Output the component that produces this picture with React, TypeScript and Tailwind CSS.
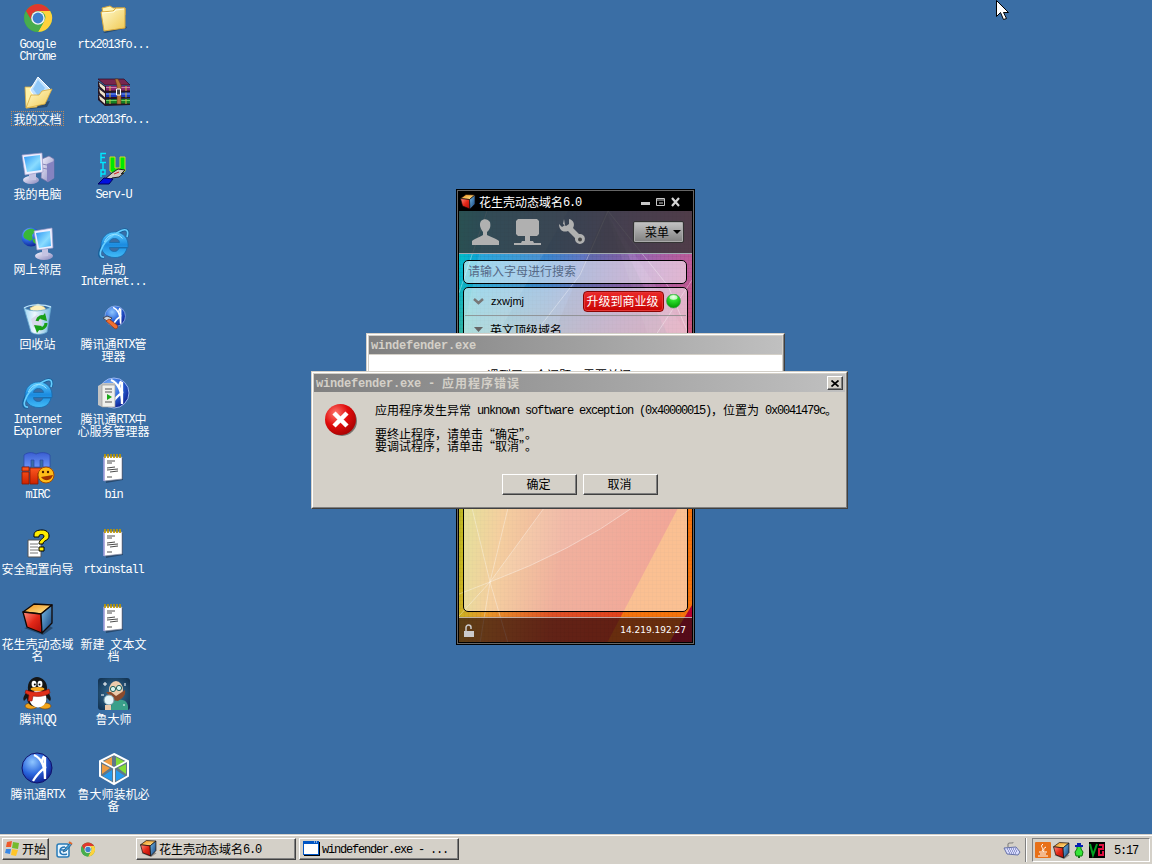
import type { ReactNode } from 'react';

const CJK = /([\u2018-\u201d\u3000-\u303f\u4e00-\u9fff\uff00-\uffef]+)/;

/** Mixed text on a bitmap-font grid: 6px Latin cells and 12px Chinese cells. */
function T({ children, bold = false }: { children: string; bold?: boolean }) {
  return (
    <span className="block h-[14px] whitespace-pre pb-[2px] leading-[12px]">
      {children.split(CJK).filter(Boolean).map((s, i) =>
        CJK.test(s) ? (
          <span key={i} className={bold ? "font-['Noto_Sans_CJK_SC',sans-serif] text-[12px] font-bold tracking-[1px]" : "font-['Noto_Sans_CJK_SC',sans-serif] text-[12px]"}>{s}</span>
        ) : (
          <span key={i} className={bold ? "align-[1px] font-['Liberation_Mono',monospace] text-[12px] font-bold leading-[8px] tracking-[-0.2px]" : "align-[1px] font-['Liberation_Mono',monospace] text-[12px] leading-[8px] tracking-[-1.2px]"}>{s}</span>
        ),
      )}
    </span>
  );
}

function Svg({ children, size = 32 }: { children: ReactNode; size?: number }) {
  return <svg width={size} height={size} viewBox="0 0 32 32" className="block shrink-0 overflow-visible">{children}</svg>;
}

function Defs() {
  return (
    <svg className="absolute h-0 w-0">
      <defs>
        <linearGradient id="folder" x1="0" y1="0" x2="1" y2="1"><stop stopColor="#fffbd0" /><stop offset="1" stopColor="#f0c850" /></linearGradient>
        <linearGradient id="screen" x1="0" y1="0" x2="1" y2="1"><stop stopColor="#2f96f4" /><stop offset=".6" stopColor="#8adcff" /><stop offset="1" stopColor="#43aef5" /></linearGradient>
        <linearGradient id="case" x1="0" y1="0" x2="1" y2="1"><stop stopColor="#f4f4ff" /><stop offset="1" stopColor="#8886bb" /></linearGradient>
        <linearGradient id="ie" x1="0" y1="0" x2="0" y2="1"><stop stopColor="#5ccbff" /><stop offset=".5" stopColor="#1b8be0" /><stop offset="1" stopColor="#43bdf8" /></linearGradient>
        <radialGradient id="globe" cx=".35" cy=".3" r=".8"><stop stopColor="#8fc6ff" /><stop offset=".5" stopColor="#2a66dd" /><stop offset="1" stopColor="#0a1684" /></radialGradient>
        <linearGradient id="bin" x1="0" y1="0" x2="1" y2="0"><stop stopColor="#9fd6f3" /><stop offset=".4" stopColor="#eef8ff" /><stop offset="1" stopColor="#78b9df" /></linearGradient>
        <linearGradient id="cubeT" x1="0" y1="0" x2="1" y2="1"><stop stopColor="#f08a10" /><stop offset="1" stopColor="#fff0a0" /></linearGradient>
        <linearGradient id="cubeL" x1="0" y1="0" x2="1" y2="1"><stop stopColor="#ff9080" /><stop offset=".5" stopColor="#e42818" /><stop offset="1" stopColor="#a80c08" /></linearGradient>
        <linearGradient id="cubeR" x1="0" y1="0" x2="1" y2="1"><stop stopColor="#7cc0ec" /><stop offset="1" stopColor="#0d3c78" /></linearGradient>
        <linearGradient id="mircM" x1="0" y1="0" x2="0" y2="1"><stop stopColor="#3a5fd2" /><stop offset="1" stopColor="#6a92f6" /></linearGradient>
        <linearGradient id="mircR" x1="0" y1="0" x2="0" y2="1"><stop stopColor="#ff5a20" /><stop offset="1" stopColor="#cc2200" /></linearGradient>
        <radialGradient id="err" cx=".35" cy=".3" r=".8"><stop stopColor="#ff7a70" /><stop offset=".5" stopColor="#e00c0c" /><stop offset="1" stopColor="#a00000" /></radialGradient>
        <radialGradient id="green" cx=".5" cy=".2" r=".8"><stop stopColor="#c8ffc0" /><stop offset=".35" stopColor="#2ee02e" /><stop offset="1" stopColor="#009800" /></radialGradient>
        <radialGradient id="sage" cx=".5" cy=".5" r=".7"><stop stopColor="#3b78a0" /><stop offset="1" stopColor="#0f2d4c" /></radialGradient>
      </defs>
    </svg>
  );
}

function Chrome({ size = 32 }: { size?: number }) {
  return (
    <Svg size={size}>
      <circle cx="16" cy="15" r="14" fill="#37a84c" />
      <path d="M3.9 8a14 14 0 0 1 24.2 0H16a7 7 0 0 0-6 10.5z" fill="#e0382e" />
      <path d="M28.2 8A14 14 0 0 1 16 29l6-10.5A7 7 0 0 0 21 9.6L16 8z" fill="#ffd23c" />
      <path d="M4 8.2A14 14 0 0 0 16 29l6-10.5a7 7 0 0 1-12 0z" fill="#48ad4d" />
      <circle cx="16" cy="15" r="6.8" fill="#f4f4f4" />
      <circle cx="16" cy="15" r="5.4" fill="#3c80cc" />
    </Svg>
  );
}
const Folder = () => (
  <Svg>
    <path d="M5 29 28 23l1 2-22 5z" fill="#00000055" />
    <path d="M4 5 12 3l3 2 12 0v7L6 14z" fill="#fff4b0" stroke="#d9a93c" />
    <path d="M3 9 15 8l3-3 9 0 0 20L6 28z" fill="url(#folder)" stroke="#d9a93c" />
    <path d="m4 10 12-1 2-2 8-1" stroke="#fffde0" fill="none" />
  </Svg>
);
const Docs = () => (
  <Svg>
    <path d="m5 27 23-4-3 6-17 2z" fill="#00000050" />
    <path d="M3 9h6l2-2 4 2v20L4 30z" fill="#fff2a8" stroke="#d8ac44" strokeWidth=".8" />
    <path d="m16-1 12 12-12 13L8 12z" fill="#c3e3ff" stroke="#fff" />
    <path d="m16 2 7 8-6 9-6-8z" fill="#8fc7f8" />
    <path d="M4 30 9 17l8 0 3-4 10-2-7 15z" fill="url(#folder)" stroke="#d8a93c" strokeWidth=".8" />
  </Svg>
);
const Computer = () => (
  <Svg>
    <path d="m20 6 7-3 5 3v19l-6 4-7-4z" fill="url(#case)" stroke="#7473a8" strokeWidth=".7" />
    <path d="m25 11 7-3v17l-7 4z" fill="#8583c0" /><path d="m20 11 5 1m-5 3 5 1" stroke="#8987b8" />
    <ellipse cx="9" cy="27" rx="8" ry="4" fill="url(#case)" /><path d="m7 20 7 0v7H7z" fill="#c4c3e2" />
    <path d="m0 2 20-2 1 19L3 22z" fill="#efefff" stroke="#9998c6" strokeWidth=".7" /><path d="m2 4 16-2 1 15L5 19z" fill="url(#screen)" />
  </Svg>
);
const Network = () => (
  <Svg>
    <circle cx="9" cy="9" r="9.500" fill="url(#globe)" />
    <path d="M2 5c3-5 8-5 11-3 1 3-3 3-3 6 2 3-1 6-4 4C3 11 0 9 2 5zm9 6c4-1 6 2 4 5-3 0-5-3-4-5z" fill="#38b838" />
    <ellipse cx="22" cy="28" rx="9" ry="4" fill="url(#case)" /><path d="M20 21h6v7h-6z" fill="#c4c3e2" />
    <path d="m12 3 18-3 1 20-16 2z" fill="#efefff" stroke="#9998c6" strokeWidth=".7" /><path d="m14 5 14-2 1 15-12 2z" fill="url(#screen)" />
  </Svg>
);
const Recycle = () => (
  <Svg>
    <path d="m8 5 8-4 6 3 4 5-16 2z" fill="#fff0ba" stroke="#dec26e" strokeWidth=".6" />
    <path d="M2 5c7 4 19 4 27-1l-4 25c-5 3-12 3-16 0z" fill="url(#bin)" stroke="#67a8cf" strokeWidth=".8" />
    <path d="m9 16 6-4 5 4-1 12-8-4z" fill="#d8d8ec" />
    <g stroke="#18a018" strokeWidth="3" fill="none"><path d="M15 18c1-4 5-6 8-3M24 20c0 4-4 7-8 5" /></g>
    <path d="m23 10 2 8-7-2zM12 22l8 1-5 7z" fill="#18a018" />
    <path d="M2 5C8 1 22 1 29 4" stroke="#bde4fb" fill="none" strokeWidth="1.4" />
  </Svg>
);
const IE = () => (
  <Svg>
    <path d="M6 29C-3 31 3 15 14 8S32-2 29 9" fill="none" stroke="#16619d" strokeWidth="3.2" />
    <path d="M16.500 4C8.500 4 3 10 3 17s5 12.500 14 12.500c6.500 0 10.500-3.500 12-9.500h-8c-1 2.500-2.500 3.500-4.500 3.500-3 0-5-1.500-5-4H30C31 10 25 4 16.500 4zM11.500 14.500c.5-3 2.500-4 5-4s4.500 1 5 4z" fill="url(#ie)" stroke="#176bac" strokeWidth=".8" />
    <path d="M6 29C-2 30 4 15 14 8S32-2 29 9" fill="none" stroke="#66ceff" strokeWidth="1.700" />
    <path d="M6.500 14c2-5 6-7.500 10-7.500 4 0 6 2 8 4" stroke="#9ce4ff" fill="none" />
  </Svg>
);
function Rtx({ dark = false }: { dark?: boolean }) {
  return (
    <>
      <circle cx="15" cy="15" r="15" fill="url(#globe)" stroke={dark ? '#10126c' : '#9cb8f0'} />
      <path d="M12 2c7 3 11 11 11 24M22 3c-3 5-2 9 2 12M24 14c-6 4-10 9-13 14M23 4v22" fill="none" stroke="#fff" strokeWidth="2.300" />
    </>
  );
}
const RtxAdmin = () => (
  <Svg>
    <g transform="translate(7 3) scale(.68)"><Rtx /></g>
    <path d="m9 13 5 2-4 4-5-4z" fill="#ccd4dd" stroke="#445" /><path d="m11 16 8 6c2 3-1 5-3 3l-8-7z" fill="#f07030" stroke="#97320d" strokeWidth=".7" />
  </Svg>
);
const RtxServer = () => (
  <Svg>
    <g transform="translate(1 0)"><Rtx /></g>
    <path d="m0 8 5-3h12v24H4l-4-2z" fill="#c3c3c3" /><path d="M4 7h13v22H4z" fill="#f0f0ec" stroke="#999" strokeWidth=".7" />
    <path d="M7 11h7M7 14h7M7 24h7" stroke="#555" /><path d="m9 16 5 3-5 3z" fill="#18a818" />
  </Svg>
);
const Mirc = () => (
  <Svg>
    <path d="M2 14V2c4-3 8-3 12-1 5-2 10-2 14 1v12h-7V7h-3v7h-6V7H9v7z" fill="url(#mircM)" stroke="#2845a6" strokeWidth=".7" />
    <g fill="url(#mircR)" stroke="#8a1700" strokeWidth=".8"><path d="M0 14h7v4H0zM0 19h7v12H0zM8 15h12v5h-4v11H8z" /></g>
    <circle cx="24" cy="22" r="8" fill="#ffbd18" stroke="#a64b00" /><circle cx="21" cy="19" r="1.200" fill="#421800" /><circle cx="26" cy="19" r="1.200" fill="#421800" />
    <path d="m19 24 12-2c-2 6-8 7-12 2z" fill="#a03200" />
  </Svg>
);
const Wizard = () => (
  <Svg>
    <path d="M6 12h13v17H6z" fill="#fff" stroke="#555" /><path d="M8 16h8M8 19h8M8 22h8M8 25h8" stroke="#777" />
    <path d="M12 9V7c0-4 4-5 8-5s7 2 7 6c0 5-6 4-6 8h-4c0-5 5-5 5-8 0-2-5-2-5 0v1zM17 19h5v4h-5z" fill="#ffee00" stroke="#000" />
  </Svg>
);
function Cube({ size = 32 }: { size?: number }) {
  return (
    <Svg size={size}>
      <path d="M2 25 21 32l10-7-7-4z" fill="#00000055" />
      <g stroke="#120805" strokeWidth="1.300" strokeLinejoin="round">
        <path d="m1 9 11-8 18 1-11 9z" fill="url(#cubeT)" /><path d="m1 9 18 2 1 19L5 24z" fill="url(#cubeL)" /><path d="m19 11 11-9 0 18-10 10z" fill="url(#cubeR)" />
      </g>
    </Svg>
  );
}
const QQ = () => (
  <Svg>
    <ellipse cx="9" cy="28" rx="6" ry="3" fill="#f2a51c" stroke="#7a4200" strokeWidth=".6" /><ellipse cx="23" cy="28" rx="6" ry="3" fill="#f2a51c" stroke="#7a4200" strokeWidth=".6" />
    <path d="M6 12C5 4 10-1 15-1s11 5 10 13c3 5 5 9 3 11l-3-3c0 5-4 9-10 9S5 25 5 20l-3 3c-2-3 1-7 4-11z" fill="#151515" />
    <ellipse cx="16" cy="21" rx="8.500" ry="8.500" fill="#fff" /><ellipse cx="12" cy="6" rx="2.400" ry="3.200" fill="#fff" /><ellipse cx="18" cy="6" rx="2.400" ry="3.200" fill="#fff" />
    <circle cx="12.800" cy="6.500" r="1" /><circle cx="17.500" cy="6.500" r="1" /><ellipse cx="15.500" cy="11" rx="7" ry="2" fill="#f7a81d" />
    <path d="M4 12c7 3 14 3 23-1l1 4c-4 3-11 4-17 3l-1 5H6l1-6-4-2z" fill="#e02f1a" stroke="#8d1208" strokeWidth=".6" />
  </Svg>
);
const Archive = () => (
  <Svg>
    {[
      { y: 13, main: '#157f24', side: '#68cf63' },
      { y: 6.5, main: '#1836bd', side: '#76a1f6' },
      { y: 0, main: '#8b256c', side: '#c97aaf' },
    ].map((b) => (
      <g key={b.y} transform={`translate(0 ${b.y})`}>
        <path d="m0 3 7 5h25v6l-25 1-7-6z" fill="#241421" /><path d="m1 4.500 6 4.500v4L2 8.500z" fill="#eee3cb" /><path d="M8 8h24v4.500H8z" fill={b.main} /><path d="M8 9.500h24" stroke={b.side} />
        <path d="M12 8v5M28 8v5" stroke="#d9b23b" />
      </g>
    ))}
    <path d="m0 1 7 6h25l-6-6z" fill="#78264e" stroke="#290c22" strokeWidth=".7" />
    <path d="M17 1h3l3 6v19h-4V8z" fill="#b3743a" stroke="#5c3211" strokeWidth=".5" /><path d="M18.500 11h4v6h-4z" fill="#444" stroke="#fff" />
  </Svg>
);
const ServU = () => (
  <Svg>
    <g fill="none" stroke="#00e8ff" strokeWidth="1.400"><path d="M8 .5H3v8M3 4.500h4M2 9.500h6M5 9.500v7M3 24v-7h4v4H3" /></g>
    <path d="M12 4h5v11h5V4h5v14l-3 2h-9l-3-2z" fill="#00e800" stroke="#d8d820" /><path d="m14 20 6-4 7 1-4 4 3-1-5 4-7 1-3 3-4-2z" fill="#d1c8bd" stroke="#222" />
    <path d="m1 30 5-5 9 1-4 5H0z" fill="#0010e0" stroke="#000060" /><path d="m16 21 5-2" stroke="#d02020" />
  </Svg>
);
const Notepad = () => (
  <Svg>
    <path d="m7 4 18 1v22l-17 3z" fill="#00000055" /><path d="m6 3 18 1v22L6 28z" fill="#fff" stroke="#8a8ca5" strokeWidth=".7" /><path d="M6 4v24" stroke="#a5a0e2" strokeWidth="1.500" />
    <path d="M9 8h8M9 10h5M9 15l8-1M9 17l11-1M12 19l8-1M9 24h5" stroke="#383838" strokeWidth=".9" /><path d="M7 1v4m3-4v4m3-4v4m3-4v4m3-4v4m3-4v4" stroke="#bd9700" strokeWidth="1.700" />
  </Svg>
);
const Sage = () => (
  <Svg>
    <rect width="32" height="32" rx="3" fill="url(#sage)" /><path d="M13 32c0-8 2-10 8-10 6-1 10 3 9 10z" fill="#3aa08a" />
    <ellipse cx="18" cy="12" rx="7" ry="9" fill="#eccbac" /><path d="m8 14 5 0 5 4 9-6c1 5-2 8-7 11l-5-1z" fill="#8b4b2c" />
    <circle cx="15" cy="11" r="2.600" fill="#d8f4ee" stroke="#23605c" /><circle cx="21" cy="10" r="2.600" fill="#d8f4ee" stroke="#23605c" />
    <circle cx="11" cy="22" r="5" fill="#e3f6fb" stroke="#789ba8" /><path d="M7 27h6v5H7z" fill="#eccbac" /><path d="M7 4v4M5 6h4M27 5v3M3 17h3M25 27h2" stroke="#fff" />
  </Svg>
);
const Hex = () => (
  <Svg>
    <path d="m16 1 14 7v15l-14 8-14-8V8z" fill="#607788" stroke="#fff" strokeWidth="2" />
    <path d="m14 4-9 5 9 5zM4 11l8 4-8 6z" fill="#ef9c42" /><path d="m18 4 9 5-9 5zM28 11l-8 4 8 6z" fill="#83dc38" /><path d="m5 23 9-6v11zM27 23l-9-6v11z" fill="#269aee" />
    <path d="M16 15v15M3 8l13 7 13-7" stroke="#fff" strokeWidth="1.800" fill="none" />
  </Svg>
);

type Item = { icon: ReactNode; lines: string[]; selected?: boolean };
const left: Item[] = [
  { icon: <Chrome />, lines: ['Google', 'Chrome'] },
  { icon: <Docs />, lines: ['我的文档'], selected: true },
  { icon: <Computer />, lines: ['我的电脑'] },
  { icon: <Network />, lines: ['网上邻居'] },
  { icon: <Recycle />, lines: ['回收站'] },
  { icon: <IE />, lines: ['Internet', 'Explorer'] },
  { icon: <Mirc />, lines: ['mIRC'] },
  { icon: <Wizard />, lines: ['安全配置向导'] },
  { icon: <Cube />, lines: ['花生壳动态域', '名'] },
  { icon: <QQ />, lines: ['腾讯QQ'] },
  { icon: <Svg><Rtx dark /></Svg>, lines: ['腾讯通RTX'] },
];
const right: Item[] = [
  { icon: <Folder />, lines: ['rtx2013fo...'] },
  { icon: <Archive />, lines: ['rtx2013fo...'] },
  { icon: <ServU />, lines: ['Serv-U'] },
  { icon: <IE />, lines: ['启动', 'Internet...'] },
  { icon: <RtxAdmin />, lines: ['腾讯通RTX管', '理器'] },
  { icon: <RtxServer />, lines: ['腾讯通RTX中', '心服务管理器'] },
  { icon: <Notepad />, lines: ['bin'] },
  { icon: <Notepad />, lines: ['rtxinstall'] },
  { icon: <Notepad />, lines: ['新建 文本文', '档'] },
  { icon: <Sage />, lines: ['鲁大师'] },
  { icon: <Hex />, lines: ['鲁大师装机必', '备'] },
];

function IconColumn({ items }: { items: Item[] }) {
  return (
    <div className="flex w-[76px] flex-col pt-[3px]">
      {items.map((it, i) => (
        <div key={i} className="flex h-[75px] flex-col items-center text-white">
          {it.icon}
          <div className={it.selected ? 'mr-px mt-[2px] flex h-[13px] flex-col items-center px-px outline-1 outline-offset-0 outline-dotted outline-[#c48b58]' : 'mr-px mt-[2px] flex flex-col items-center'}>
            {it.lines.map((l) => <div key={l} className="h-[12px]"><T>{l}</T></div>)}
          </div>
        </div>
      ))}
    </div>
  );
}

function AppBackdrop() {
  return (
    <svg className="absolute inset-0" width="233" height="432" viewBox="459 211 233 432">
      <defs>
        <linearGradient id="top" x1="0" x2="1" y1="0" y2=".15"><stop stopColor="#00c4c8" /><stop offset=".12" stopColor="#129cd8" /><stop offset=".4" stopColor="#3d83cc" /><stop offset=".7" stopColor="#8c68b8" /><stop offset="1" stopColor="#c05a98" /></linearGradient>
        <linearGradient id="bottom" x1="0" x2="1" y1="0" y2=".25"><stop stopColor="#8fb838" /><stop offset=".2" stopColor="#c8b820" /><stop offset=".34" stopColor="#e8942a" /><stop offset=".6" stopColor="#de5026" /><stop offset="1" stopColor="#e23c1a" /></linearGradient>
        <linearGradient id="fade" x1="0" x2="0" y1="0" y2="1"><stop offset=".15" stopColor="#000" /><stop offset=".66" stopColor="#fff" /></linearGradient>
        <mask id="mask"><rect x="459" y="211" width="233" height="432" fill="url(#fade)" /></mask>
        <pattern id="grid" width="4" height="4" patternUnits="userSpaceOnUse"><path d="M0 0h4M0 0v4" stroke="#000" strokeOpacity=".07" /></pattern>
      </defs>
      <rect x="459" y="211" width="233" height="432" fill="url(#top)" />
      <g mask="url(#mask)"><rect x="459" y="211" width="233" height="432" fill="url(#bottom)" /></g>
      <path d="m678 508 14-25v160h-85z" fill="#f87c0a" opacity=".85" /><path d="m692 605-23 38h23z" fill="#b80030" />
      <path d="m606 211 86 130h-42z" fill="#fff" opacity=".08" /><path d="m606 211-60 140h130z" fill="#444868" opacity=".2" /><path d="M488 211h80l-80 140h-29z" fill="#fff" opacity=".1" />
      <g fill="none" stroke="#fff" strokeOpacity=".35"><path d="m490 582-18-74M490 582l18-74M490 582l54-74M490 582q82-31 142-74M490 582l-31 12M490 582l-31 34M490 582l-10 61M490 582l18 61M608 211l-28 64-62 80M608 211l60 75 30 70M487 211l-28 82M692 280l-46 70" /></g>
      <path d="m490 582 54-74h88q-60 44-142 74z" fill="#ffe" opacity=".12" />
      <rect x="459" y="211" width="233" height="432" fill="url(#grid)" />
    </svg>
  );
}

function PeanutShell() {
  return (
    <section className="absolute left-[456px] top-[189px] h-[456px] w-[239px] border border-black bg-black">
      <div className="h-full border border-[#666] p-px">
        <div className="flex h-full flex-col">
          <header className="flex h-[19px] shrink-0 items-center bg-black pl-px pr-[10px] text-white">
            <Cube size={16} /><span className="ml-[3px]"><T>花生壳动态域名6.0</T></span>
            <svg className="ml-auto" width="42" height="12" viewBox="0 0 42 12"><path d="M1 6h9v3H1z" fill="#c8c8c8" /><path d="M16.500 2.500h8v7h-8zM16 4h9M19 7h4" fill="none" stroke="#c8c8c8" /><path d="m32 2 7 8m0-8-7 8" stroke="#d5d5d5" strokeWidth="2.200" /></svg>
          </header>
          <div className="relative flex min-h-0 flex-1 flex-col overflow-hidden">
            <AppBackdrop />
            <div className="relative flex h-[43px] shrink-0 items-center border-b border-[#a0a9b0] bg-[#353535]/80 pl-[13px] pr-[8px]">
              <svg width="116" height="30" viewBox="0 0 116 30" fill="#b0b0b0">
                <path d="M9 4c3-3 7-2 9 1 1 5 0 7-3 10v3c4 2 10 4 12 6v4H0v-4c2-2 8-4 11-6v-3C8 11 7 7 9 4z" />
                <path d="M46 2h19l2 2v13l-2 2h-7v5h3l1 2h7v2H42v-2h7l1-2h3v-5h-7l-2-2V4z" />
                <path d="m92 2-1 5 3 2 3-2 0-5c5 1 6 6 4 9l6 6a5 5 0 1 1-4 4l-7-7c-5 2-9-1-9-7l3 3 3-2z" /><circle cx="108" cy="22.500" r="2" fill="#454545" />
              </svg>
              <button className="ml-auto flex h-[22px] w-[51px] items-center rounded-[2px] border border-[#333] bg-linear-to-b from-[#c4c4c4] to-[#808080] pl-[11px] text-black shadow-[inset_0_0_0_1px_#aaa]">
                <T>菜单</T><svg className="ml-[4px]" width="8" height="4"><path d="M0 0h8L4 4z" /></svg>
              </button>
            </div>
            <div className="relative flex min-h-0 flex-1 flex-col px-[4px] pb-[5px] pt-[6px]">
              <div className="flex h-[24px] w-[224px] shrink-0 items-center rounded-[5px] border border-black bg-white/55 pb-[2px] pl-[4px] text-[#566987]"><T>请输入字母进行搜索</T></div>
              <div className="mt-[3px] min-h-0 flex-1 rounded-[5px] border border-black bg-white/55">
                <div className="mx-px flex h-[28px] items-center border-b border-[#888]/80 pl-[8px]">
                  <svg width="11" height="8"><path d="m1 1 4.500 4L10 1" fill="none" stroke="#777" strokeWidth="2.500" /></svg>
                  <span className="ml-[7px] font-['Liberation_Sans',sans-serif] text-[11px]">zxwjmj</span>
                  <span className="ml-auto mr-[2px] flex h-[21px] w-[81px] items-center justify-center rounded-[4px] border border-[#8b0505] bg-linear-to-b from-[#ec2828] to-[#c80000] pb-[2px] pr-[2px] text-white shadow-[inset_0_0_0_1px_#e63636]"><T>升级到商业级</T></span>
                  <svg className="mr-[5px]" width="15" height="16"><circle cx="7.500" cy="7" r="7" fill="url(#green)" stroke="#499b58" strokeWidth=".7" /><ellipse cx="7.500" cy="3.500" rx="4" ry="2.200" fill="#fff" opacity=".65" /></svg>
                </div>
                <div className="flex h-[26px] items-center pl-[10px]"><svg width="9" height="5"><path d="M0 0h9L4.500 5z" fill="#666" /></svg><span className="ml-[7px] pt-px"><T>英文顶级域名</T></span></div>
              </div>
            </div>
            <footer className="relative flex h-[25px] shrink-0 items-center border-t border-white/60 bg-[#2c1010]/70 pl-[4px] pr-[6px] text-white">
              <svg width="12" height="13" viewBox="0 0 12 13"><path d="M3 7V3.500A2.500 2.500 0 0 1 8 3.500V5" fill="none" stroke="#ccc" strokeWidth="1.500" /><path d="M1 7h10v6H1z" fill="#ccc" /></svg>
              <span className="ml-auto pt-px font-['DejaVu_Sans',sans-serif] text-[9px] leading-none">14.219.192.27</span>
            </footer>
          </div>
        </div>
      </div>
    </section>
  );
}

function Frame({ className, children }: { className: string; children: ReactNode }) {
  return (
    <section className={`${className} border border-b-[#404040] border-l-[#d4d0c8] border-r-[#404040] border-t-[#d4d0c8] bg-[#d4d0c8] text-black`}>
      <div className="h-full border border-b-[#808080] border-l-white border-r-[#808080] border-t-white p-px">{children}</div>
    </section>
  );
}

function TitleBar({ title, close = false }: { title: string; close?: boolean }) {
  return (
    <div className="flex h-[18px] items-center justify-between bg-linear-to-r from-[#808080] to-[#c0c0c0] pl-[2px] pr-[2px] text-[#d4d0c8]">
      <T bold>{title}</T>
      {close && (
        <button className="flex h-[14px] w-[16px] items-center justify-center border border-b-[#404040] border-l-white border-r-[#404040] border-t-white bg-[#d4d0c8] shadow-[inset_-1px_-1px_0_#808080]">
          <svg width="8" height="7"><path d="m.5.5 7 6m0-6-7 6" stroke="#000" strokeWidth="1.700" /></svg>
        </button>
      )}
    </div>
  );
}

function Button({ children }: { children: string }) {
  return (
    <button className="flex h-[21px] w-[75px] items-center justify-center border border-b-[#404040] border-l-white border-r-[#404040] border-t-white pb-[2px] pr-[2px] shadow-[inset_-1px_-1px_0_#808080]"><T>{children}</T></button>
  );
}

function ErrorDialog() {
  return (
    <Frame className="absolute left-[311px] top-[371px] h-[138px] w-[537px]">
      <TitleBar title="windefender.exe - 应用程序错误" close />
      <div className="flex h-[82px] pl-[11px] pt-[12px]">
        <Svg><circle cx="17" cy="17" r="15" fill="#00000070" /><circle cx="15.500" cy="15.500" r="15.500" fill="url(#err)" /><path d="m9 9 13 13m0-13L9 22" stroke="#fff" strokeWidth="4.500" /></Svg>
        <div className="-mt-px ml-[18px]">
          <div className="h-[12px]"><T>应用程序发生异常 unknown software exception (0x40000015)，位置为 0x0041479c。</T></div>
          <div className="mt-[12px] h-[12px]"><T>要终止程序，请单击“确定”。</T></div>
          <div className="h-[12px]"><T>要调试程序，请单击“取消”。</T></div>
        </div>
      </div>
      <div className="flex gap-[6px] pl-[188px]"><Button>确定</Button><Button>取消</Button></div>
    </Frame>
  );
}

function TaskButton({ className, children }: { className: string; children: ReactNode }) {
  return <button className={`${className} flex h-[22px] items-center border border-b-[#404040] border-l-white border-r-[#404040] border-t-white bg-[#d4d0c8] pb-px leading-none shadow-[inset_-1px_-1px_0_#808080]`}>{children}</button>;
}

function Taskbar() {
  return (
    <footer className="flex h-[30px] shrink-0 border-t border-[#d4d0c8] bg-[#d4d0c8] text-black shadow-[inset_0_1px_0_#fff]">
      <div className="flex w-full items-start pl-[2px] pr-[2px] pt-[3px]">
        <TaskButton className="w-[47px] pl-[1px]">
          <svg width="16" height="15" viewBox="0 0 16 15"><path d="m3 1 5-1-1 6-5 0z" fill="#ef5929" /><path d="m9 1 6 1-1 6-6-1z" fill="#74bb2d" /><path d="m2 8 5 0-1 5-5-1z" fill="#3888e5" /><path d="m8 8 6 1-2 6-5-1z" fill="#ffc528" /></svg>
          <span className="ml-[2px]"><T>开始</T></span>
        </TaskButton>
        <div className="ml-[7px] flex h-[22px] w-[80px] items-center gap-[7px] pt-px">
          <svg width="17" height="17" viewBox="0 0 17 17"><rect x="1" y="3" width="12" height="13" rx="2" fill="#e5f5ff" stroke="#287bb8" strokeWidth="1.500" /><path d="M9 6c-4 0-5 2-5 4 0 4 4 4 7 3M5 9h5V6" fill="none" stroke="#2474b5" strokeWidth="1.500" /><path d="m8 9 6-7 2 1-6 7-3 1z" fill="#409dd8" stroke="#205079" strokeWidth=".7" /><path d="m13 1 3 2" stroke="#e16b32" strokeWidth="2" /></svg>
          <Chrome size={16} />
        </div>
        <TaskButton className="w-[160px] pl-[3px]"><Cube size={17} /><span className="ml-[2px]"><T>花生壳动态域名6.0</T></span></TaskButton>
        <TaskButton className="ml-[3px] w-[160px] pl-[3px]">
          <svg width="17" height="15"><path d="M1 1h16v14H1z" /><path d="M0 0h16v14H0z" fill="#0055c4" /><path d="M1 3h14v10H1z" fill="#fff" /><path d="M11 1h1m1 0h1" stroke="#fff" /></svg>
          <span className="ml-[2px]"><T>windefender.exe - ...</T></span>
        </TaskButton>
        <svg className="ml-auto mr-[4px] mt-[3px]" width="18" height="16" viewBox="0 0 18 16"><path d="M5 6V3c0-2 6 0 5-2" fill="none" stroke="#777" /><path d="m1 7 12-1 4 5-2 3-11-1z" fill="#d8dcff" stroke="#6570a6" /><path d="m4 8 9 0M5 10l9 0M6 12l8 0" stroke="#535b9c" strokeDasharray="1 1" /></svg>
        <div className="mr-[5px] h-[24px] w-[2px] border-l border-[#808080] bg-white" />
        <div className="flex h-[24px] w-[118px] items-center border border-b-white border-l-[#808080] border-r-white border-t-[#808080] pl-[2px]">
          <svg width="16" height="16"><rect width="16" height="16" rx="1" fill="#e87018" /><path d="M8 2c-4 3 2 4-1 7M11 5c-4 2-1 3-3 5M4 10h8M5 12h6M3 14h10" fill="none" stroke="#fff" /></svg>
          <span className="ml-[2px]"><Cube size={17} /></span>
          <svg className="ml-[4px]" width="10" height="16"><path d="M3 3h4v4l2 3-1 4H2l-1-4 2-3z" fill="#38e438" stroke="#087808" /><path d="M1 4h8M3 2h4" stroke="#0720b0" strokeWidth="2" /><path d="M4 14h2v2H4z" fill="#136b13" /></svg>
          <svg className="ml-[5px]" width="16" height="16"><rect width="16" height="16" /><path d="m1 2 3 11L8 2" fill="none" stroke="#00a020" strokeWidth="2" /><path d="M10 3h4v4h-4v6h4V9" fill="none" stroke="#e01040" strokeWidth="2" /></svg>
          <span className="ml-[9px]"><T>5:17</T></span>
        </div>
      </div>
    </footer>
  );
}

export default function App() {
  return (
    <main className="relative flex h-[864px] w-[1152px] flex-col overflow-hidden bg-[#3a6ea5]">
      <Defs />
      <div className="flex min-h-0 flex-1"><IconColumn items={left} /><IconColumn items={right} /></div>
      <PeanutShell />
      <Frame className="absolute left-[366px] top-[333px] h-[120px] w-[419px]">
        <TitleBar title="windefender.exe" />
        <div className="mt-px h-[90px] bg-white pl-[118px] pt-[13px]"><T>遇到了一个问题，需要关闭</T></div>
      </Frame>
      <ErrorDialog />
      <svg className="absolute left-[996px] top-0" width="13" height="22" viewBox="0 0 13 22"><path d="M.5.5v16l4-4 3 7 3-1-3-6h5z" fill="#fff" stroke="#000" /></svg>
      <Taskbar />
    </main>
  );
}
